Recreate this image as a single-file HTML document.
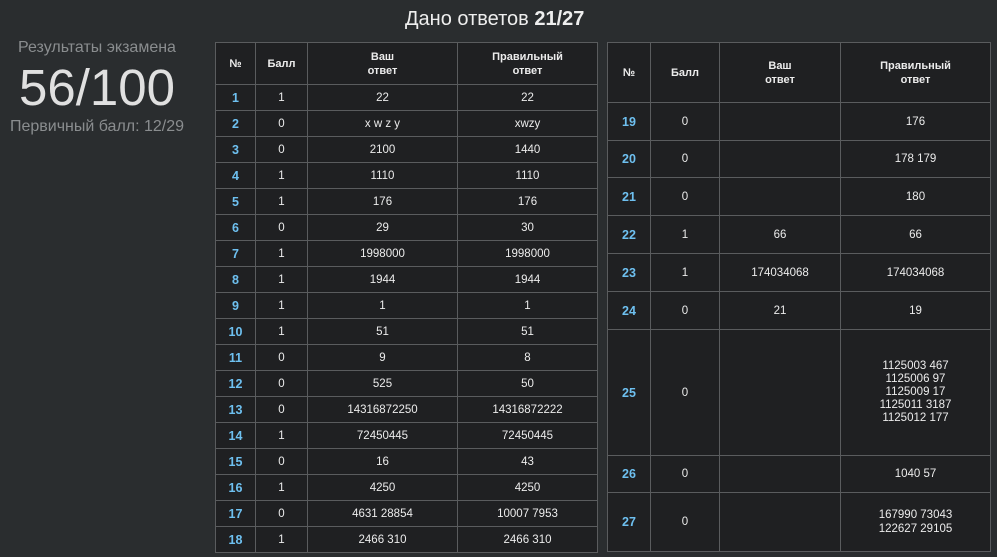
<!DOCTYPE html>
<html><head><meta charset="utf-8"><style>
body{margin:0;width:997px;height:557px;background:#2a2d2f;font-family:"Liberation Sans",sans-serif;color:#e6e6e6;position:relative;overflow:hidden}
.title{position:absolute;left:405px;top:8px;font-size:20px;color:#eee;white-space:nowrap}
.title b{font-weight:bold}
.left{position:absolute;left:0;width:194px;text-align:center;color:#8a8d8f;white-space:nowrap}
table{position:absolute;border-collapse:collapse;background:#1f2022;table-layout:fixed}
td,th{border:1px solid #5a5c5e;text-align:center;font-size:11.5px;padding:0;color:#ececec}
th{font-size:11px;font-weight:bold;line-height:14px}
td.n{color:#6ec0f0;font-weight:bold;font-size:12.5px}
</style></head><body>
<div class="title">Дано ответов <b>21/27</b></div>
<div class="left" style="top:39px;font-size:16px">Результаты экзамена</div>
<div class="left" style="top:58px;font-size:51px;color:#e0e0e0">56/100</div>
<div class="left" style="top:118px;font-size:16px">Первичный балл: 12/29</div>

<table style="left:215px;top:42px;width:382px">
<colgroup><col style="width:40px"><col style="width:52px"><col style="width:150px"><col style="width:140px"></colgroup>
<tr style="height:42px"><th>№</th><th>Балл</th><th>Ваш<br>ответ</th><th>Правильный<br>ответ</th></tr>
<tr style="height:26px"><td class="n">1</td><td>1</td><td>22</td><td>22</td></tr>
<tr style="height:26px"><td class="n">2</td><td>0</td><td>x w z y</td><td>xwzy</td></tr>
<tr style="height:26px"><td class="n">3</td><td>0</td><td>2100</td><td>1440</td></tr>
<tr style="height:26px"><td class="n">4</td><td>1</td><td>1110</td><td>1110</td></tr>
<tr style="height:26px"><td class="n">5</td><td>1</td><td>176</td><td>176</td></tr>
<tr style="height:26px"><td class="n">6</td><td>0</td><td>29</td><td>30</td></tr>
<tr style="height:26px"><td class="n">7</td><td>1</td><td>1998000</td><td>1998000</td></tr>
<tr style="height:26px"><td class="n">8</td><td>1</td><td>1944</td><td>1944</td></tr>
<tr style="height:26px"><td class="n">9</td><td>1</td><td>1</td><td>1</td></tr>
<tr style="height:26px"><td class="n">10</td><td>1</td><td>51</td><td>51</td></tr>
<tr style="height:26px"><td class="n">11</td><td>0</td><td>9</td><td>8</td></tr>
<tr style="height:26px"><td class="n">12</td><td>0</td><td>525</td><td>50</td></tr>
<tr style="height:26px"><td class="n">13</td><td>0</td><td>14316872250</td><td>14316872222</td></tr>
<tr style="height:26px"><td class="n">14</td><td>1</td><td>72450445</td><td>72450445</td></tr>
<tr style="height:26px"><td class="n">15</td><td>0</td><td>16</td><td>43</td></tr>
<tr style="height:26px"><td class="n">16</td><td>1</td><td>4250</td><td>4250</td></tr>
<tr style="height:26px"><td class="n">17</td><td>0</td><td>4631 28854</td><td>10007 7953</td></tr>
<tr style="height:26px"><td class="n">18</td><td>1</td><td>2466 310</td><td>2466 310</td></tr>
</table>

<table style="left:607px;top:42px;width:383px">
<colgroup><col style="width:43px"><col style="width:69px"><col style="width:121px"><col style="width:150px"></colgroup>
<tr style="height:60px"><th>№</th><th>Балл</th><th>Ваш<br>ответ</th><th>Правильный<br>ответ</th></tr>
<tr style="height:38px"><td class="n">19</td><td>0</td><td></td><td>176</td></tr>
<tr style="height:37px"><td class="n">20</td><td>0</td><td></td><td>178 179</td></tr>
<tr style="height:38px"><td class="n">21</td><td>0</td><td></td><td>180</td></tr>
<tr style="height:38px"><td class="n">22</td><td>1</td><td>66</td><td>66</td></tr>
<tr style="height:38px"><td class="n">23</td><td>1</td><td>174034068</td><td>174034068</td></tr>
<tr style="height:38px"><td class="n">24</td><td>0</td><td>21</td><td>19</td></tr>
<tr style="height:126px"><td class="n">25</td><td>0</td><td></td><td style="line-height:13px">1125003 467<br>1125006 97<br>1125009 17<br>1125011 3187<br>1125012 177</td></tr>
<tr style="height:37px"><td class="n">26</td><td>0</td><td></td><td>1040 57</td></tr>
<tr style="height:59px"><td class="n">27</td><td>0</td><td></td><td style="line-height:14px">167990 73043<br>122627 29105</td></tr>
</table>
</body></html>
